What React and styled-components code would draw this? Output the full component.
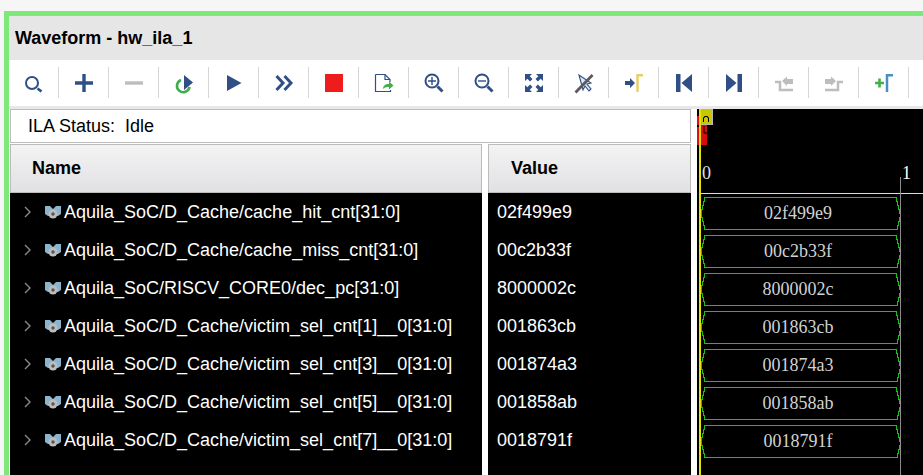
import React from 'react'
import styled, { createGlobalStyle } from 'styled-components'

const GlobalStyle = createGlobalStyle`
  html, body { margin: 0; padding: 0; background: #f6f6f6; overflow: hidden; }
  body { font-family: "Liberation Sans", Arial, sans-serif; }
`

const signals = [
  ['Aquila_SoC/D_Cache/cache_hit_cnt[31:0]', '02f499e9'],
  ['Aquila_SoC/D_Cache/cache_miss_cnt[31:0]', '00c2b33f'],
  ['Aquila_SoC/RISCV_CORE0/dec_pc[31:0]', '8000002c'],
  ['Aquila_SoC/D_Cache/victim_sel_cnt[1]__0[31:0]', '001863cb'],
  ['Aquila_SoC/D_Cache/victim_sel_cnt[3]__0[31:0]', '001874a3'],
  ['Aquila_SoC/D_Cache/victim_sel_cnt[5]__0[31:0]', '001858ab'],
  ['Aquila_SoC/D_Cache/victim_sel_cnt[7]__0[31:0]', '0018791f'],
]

const NAVY = '#2f4f86'
const GREY = '#bdbdbd'

const Svg = ({ children }) => <svg width="24" height="24" viewBox="0 0 24 24" fill="none">{children}</svg>

const icons = [
  <Svg key="search"><circle cx="10" cy="12" r="6" stroke={NAVY} strokeWidth="2" /><path d="M15.500 17.500l4 3" stroke={NAVY} strokeWidth="2.800" /></Svg>,
  <Svg key="add"><path d="M12 3v18M3 12h18" stroke={NAVY} strokeWidth="3.400" /></Svg>,
  <Svg key="remove"><path d="M3 12h18" stroke={GREY} strokeWidth="3.400" /></Svg>,
  <Svg key="rerun"><path d="M9 9a6.300 6.300 0 1 0 8.500 7" stroke="#43ad4b" strokeWidth="2.600" /><path d="M12 4l9 7.500-9 7.500z" fill={NAVY} /></Svg>,
  <Svg key="play"><path d="M5 4l14.500 8-14.500 8z" fill={NAVY} /></Svg>,
  <Svg key="forward"><path d="M4.500 5l6.500 7-6.500 7M12.500 5l6.500 7-6.500 7" stroke={NAVY} strokeWidth="3" /></Svg>,
  <Svg key="stop"><rect x="3" y="3" width="18" height="18" fill="#ee1c1c" /></Svg>,
  <Svg key="export"><path d="M3.500 3.500H13l5 5V11M3.500 3.500v17h15V19" stroke={NAVY} strokeWidth="1.200" /><path d="M13 3.500v5h5" stroke={NAVY} strokeWidth="1.200" /><path d="M11 18c0-3 2-5 6-5v-2.500l4.500 4-4.500 4V16c-3 0-4.500.5-6 2z" fill="#3fb04a" /></Svg>,
  <Svg key="zoomin"><circle cx="10" cy="10" r="6.500" stroke={NAVY} strokeWidth="2" /><path d="M10 6v8M6 10h8" stroke={NAVY} strokeWidth="1.400" /><path d="M15.500 15.500l5 5" stroke={NAVY} strokeWidth="3" /></Svg>,
  <Svg key="zoomout"><circle cx="10" cy="10" r="6.500" stroke={NAVY} strokeWidth="2" /><path d="M6 10h8" stroke={NAVY} strokeWidth="1.400" /><path d="M15.500 15.500l5 5" stroke={NAVY} strokeWidth="3" /></Svg>,
  <Svg key="fit"><path d="M3 3h7l-2.300 2.300 2.800 2.800-2.400 2.400-2.800-2.800L3 10zM21 3h-7l2.300 2.300-2.800 2.800 2.400 2.400 2.800-2.800L21 10zM3 21h7l-2.300-2.300 2.800-2.800-2.400-2.400-2.800 2.800L3 14zM21 21h-7l2.300-2.300-2.800-2.800 2.400-2.400 2.800 2.800L21 14z" fill={NAVY} /></Svg>,
  <Svg key="cursor"><path d="M7 4l4 15 2-4 4 5 2-2-4-5 4-1z" fill="#dbe6f4" stroke={NAVY} strokeWidth="1.100" /><path d="M3.500 21.500L20.500 4" stroke="#5b5b5b" strokeWidth="2.800" /></Svg>,
  <Svg key="marker"><path d="M3 10h5V7l5 5-5 5v-3H3z" fill={NAVY} /><path d="M15.500 21V4.200H21" stroke="#e6cf6e" strokeWidth="2.500" /></Svg>,
  <Svg key="first"><rect x="4" y="3" width="4.500" height="18" fill={NAVY} /><path d="M20 3v18L9.500 12z" fill={NAVY} /></Svg>,
  <Svg key="last"><rect x="15.500" y="3" width="4.500" height="18" fill={NAVY} /><path d="M4 3v18l10.500-9z" fill={NAVY} /></Svg>,
  <Svg key="prev"><path d="M3 11h5v8h13" stroke={GREY} strokeWidth="2.500" /><path d="M10 10l5-4.500V8h6v5h-6v2z" fill={GREY} /></Svg>,
  <Svg key="next"><path d="M21 11h-5v8H3" stroke={GREY} strokeWidth="2.500" /><path d="M3 8h6V5.500l5 4.500-5 5v-2H3z" fill={GREY} /></Svg>,
  <Svg key="addmarker"><path d="M3 12h9M7.500 7.500v9" stroke="#3fb04a" strokeWidth="2.600" /><path d="M15 21V4.200h6" stroke="#4a8fc2" strokeWidth="2.500" /></Svg>,
]

const Frame = styled.div`
  margin: 11px 0 0 4px;
  height: 464px;
  box-sizing: border-box;
  border-top: 5px solid #7ee87a;
  border-left: 5px solid #7ee87a;
  background: #fff;
  display: flex;
  flex-direction: column;
  overflow: hidden;
`

const TitleBar = styled.div`
  height: 44px;
  flex: none;
  background: #e6e6e6;
  display: flex;
  align-items: center;
  padding-left: 6px;
  font-size: 18px;
  font-weight: 700;
  color: #000;
`

const Toolbar = styled.div`
  height: 46px;
  flex: none;
  background: #fff;
  display: flex;
  align-items: center;
  padding-bottom: 1px;
  box-sizing: border-box;
`

const ToolButton = styled.div`
  width: 49px;
  height: 31px;
  flex: none;
  border-right: 1px solid #d6d6d6;
  display: flex;
  align-items: center;
  justify-content: center;
`

const Divider = styled.div`
  height: 3px;
  flex: none;
  background: #e8e8e8;
`

const Body = styled.div`
  flex: 1;
  min-height: 0;
  display: flex;
`

const SignalPane = styled.div`
  width: 682px;
  flex: none;
  padding-left: 1px;
  box-sizing: border-box;
  display: flex;
  flex-direction: column;
`

const StatusBox = styled.div`
  height: 34px;
  flex: none;
  box-sizing: border-box;
  border: 1px solid #bcbcbc;
  display: flex;
  align-items: center;
  padding-left: 17px;
  font-size: 18px;
  white-space: pre;
  color: #000;
`

const Columns = styled.div`
  flex: 1;
  margin-top: 1px;
  display: grid;
  grid-template-columns: 472px 203px;
  column-gap: 6px;
`

const Column = styled.div`
  display: flex;
  flex-direction: column;
  min-width: 0;
`

const HeaderCell = styled.div`
  height: 49px;
  flex: none;
  box-sizing: border-box;
  border: 1px solid #bcbcbc;
  background: linear-gradient(#f3f3f3, #e1e1e4);
  display: flex;
  align-items: center;
  padding-left: ${(p) => p.$inset}px;
  font-size: 18px;
  font-weight: 700;
  color: #000;
`

const RowList = styled.div`
  flex: 1;
  background: #000;
  display: flex;
  flex-direction: column;
`

const Row = styled.div`
  height: 38px;
  flex: none;
  display: flex;
  align-items: center;
  padding-left: ${(p) => p.$inset}px;
  color: #fff;
  font-size: 18px;
  white-space: nowrap;
`

const Chevron = styled.svg`
  width: 8px;
  height: 12px;
  flex: none;
  margin-right: 12px;
`

const BusIcon = styled.svg`
  width: 18px;
  height: 16px;
  flex: none;
  margin-right: 2px;
`

const WavePane = styled.div`
  flex: 1;
  margin-left: 6px;
  background: #000;
  position: relative;
  overflow: hidden;
`

const Ruler = styled.div`
  height: 85px;
  box-sizing: border-box;
  border-bottom: 1px solid #dcdcdc;
  margin-left: 4px;
`

const RulerLabel = styled.span`
  position: absolute;
  top: 54px;
  left: ${(p) => p.$left}px;
  font-family: "Liberation Serif", serif;
  font-size: 18px;
  color: ${(p) => p.$color};
`

const WaveRow = styled.div`
  height: 38px;
  width: 196px;
  margin-left: 3px;
  position: relative;
  display: flex;
  align-items: center;
  justify-content: center;
  font-family: "Liberation Serif", serif;
  font-size: 18px;
  color: #d2d2d2;
`

const WaveShape = styled.svg`
  position: absolute;
  left: 0;
  top: 3px;
`

const WaveLabel = styled.span`
  position: relative;
`

const Cursor = styled.div`
  position: absolute;
  top: ${(p) => p.$top}px;
  bottom: 0;
  left: ${(p) => p.$left}px;
  width: ${(p) => p.$width}px;
  background: ${(p) => p.$color};
`

const MarkerFlag = styled.svg`
  position: absolute;
  left: 0;
  top: 0;
`

const BusGlyph = () => (
  <BusIcon viewBox="0 0 18 16">
    <path d="M1 2h5l3 3 3-3h5v8l-3 2H4l-3-2z" fill="#8db4cf" />
    <circle cx="9" cy="10" r="4.500" fill="#bdbdbd" />
    <circle cx="9" cy="10" r="1.700" fill="#555" />
  </BusIcon>
)

const App = () => {
  return (
    <>
      <GlobalStyle />
      <Frame>
        <TitleBar>Waveform - hw_ila_1</TitleBar>
        <Toolbar>
          {icons.map((icon) => <ToolButton key={icon.key}>{icon}</ToolButton>)}
        </Toolbar>
        <Divider />
        <Body>
          <SignalPane>
            <StatusBox>ILA Status:  Idle</StatusBox>
            <Columns>
              <Column>
                <HeaderCell $inset={21}>Name</HeaderCell>
                <RowList>
                  {signals.map(([name]) => (
                    <Row key={name} $inset={14}>
                      <Chevron viewBox="0 0 8 12"><path d="M1 1l5 5-5 5" stroke="#8a8a8a" strokeWidth="1.400" fill="none" /></Chevron>
                      <BusGlyph />
                      {name}
                    </Row>
                  ))}
                </RowList>
              </Column>
              <Column>
                <HeaderCell $inset={22}>Value</HeaderCell>
                <RowList>
                  {signals.map(([name, value]) => <Row key={name} $inset={9}>{value}</Row>)}
                </RowList>
              </Column>
            </Columns>
          </SignalPane>
          <WavePane>
            <Ruler />
            <RulerLabel $left={5} $color="#e0e0e0">0</RulerLabel>
            <RulerLabel $left={205} $color="#fff">1</RulerLabel>
            {signals.map(([name, value]) => (
              <WaveRow key={name}>
                <WaveShape width="203" height="33" viewBox="0 0 203 33" shapeRendering="crispEdges">
                  <path d="M1.500 16.500V12.500H2.500V8.500H3.500V4.500H4.500V.5H196.500V4.500H197.500V8.500H198.500V12.500H199.500V16.500H200.500V20.500H199.500V24.500H198.500V28.500H197.500V32.500H4.500V28.500H3.500V24.500H2.500V20.500H1.500z" stroke="#10c810" strokeWidth="1" fill="none" />
                </WaveShape>
                <WaveLabel>{value}</WaveLabel>
              </WaveRow>
            ))}
            <Cursor $top={68} $left={203} $width={1} $color="#8c8c8c" />
            <Cursor $top={0} $left={2} $width={2} $color="#e4e400" />
            <MarkerFlag width="20" height="40" viewBox="0 0 20 40">
              <rect x="0" y="7" width="2" height="9" fill="#e01010" />
              <rect x="0" y="18" width="2" height="18" fill="#e01010" />
              <rect x="4" y="0" width="12" height="16" fill="#b8b8b8" />
              <rect x="4" y="0" width="11" height="15" fill="#c8c800" />
              <rect x="4" y="16" width="6" height="20" fill="#d80c0c" />
              <path d="M6.500 13V8.500h1v-1h3v1h1V13" stroke="#000" strokeWidth="1" fill="none" />
              <path d="M7 17v7h3" stroke="#000" strokeWidth="1" fill="none" />
            </MarkerFlag>
          </WavePane>
        </Body>
      </Frame>
    </>
  )
}

export default App
